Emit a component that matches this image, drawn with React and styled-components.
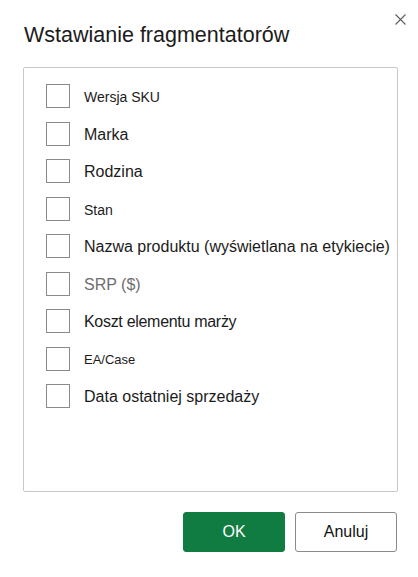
import React from 'react';
import styled, { createGlobalStyle } from 'styled-components';

const GlobalStyle = createGlobalStyle`
  html, body {
    margin: 0;
    padding: 0;
    background: #ffffff;
  }
  body {
    font-family: "Liberation Sans", Arial, sans-serif;
    color: #242424;
    -webkit-font-smoothing: antialiased;
  }
`;

const Dialog = styled.div`
  width: 418px;
  height: 577px;
  box-sizing: border-box;
  padding: 0 20px 0 23px;
  display: flex;
  flex-direction: column;
`;

const Header = styled.div`
  display: flex;
  justify-content: space-between;
  align-items: flex-start;
  height: 67px;
`;

const Title = styled.h1`
  margin: 23px 0 0 1px;
  font-size: 21.5px;
  font-weight: 400;
  line-height: 25px;
  color: #1b1b1b;
`;

const CloseButton = styled.button`
  margin: 12px -9px 0 0;
  width: 14px;
  height: 14px;
  padding: 0;
  border: none;
  background: none;
  display: flex;
  align-items: center;
  justify-content: center;
  cursor: pointer;
`;

const ListBox = styled.div`
  width: 375px;
  height: 425px;
  box-sizing: border-box;
  border: 1px solid #c8c8c8;
  border-radius: 2px;
  padding: 16px 0 0 22px;
  display: flex;
  flex-direction: column;
`;

const Row = styled.label`
  display: flex;
  align-items: center;
  height: 37.5px;
  gap: 14px;
  cursor: pointer;
`;

const Box = styled.span`
  width: 24px;
  height: 24px;
  box-sizing: border-box;
  border: 1px solid #8a8a8a;
  background: #fff;
  flex: none;
  margin-top: -13px;
`;

const Label = styled.span`
  font-size: ${p => p.$size}px;
  color: ${p => (p.$muted ? '#6e6e6e' : '#1b1b1b')};
  letter-spacing: ${p => p.$tight ? '-0.3px' : '0'};
  margin-top: -11px;
  white-space: nowrap;
`;

const Footer = styled.div`
  display: flex;
  justify-content: flex-end;
  gap: 10px;
  margin-top: 20px;
  padding-right: 1px;
`;

const Button = styled.button`
  width: 102px;
  height: 40px;
  box-sizing: border-box;
  border-radius: 3px;
  font-family: "Liberation Sans", Arial, sans-serif;
  font-size: 16px;
  cursor: pointer;
  border: 1px solid ${p => (p.$primary ? '#107c41' : '#8a8a8a')};
  background: ${p => (p.$primary ? '#107c41' : '#ffffff')};
  color: ${p => (p.$primary ? '#ffffff' : '#111111')};
`;

const fields = [
  { text: 'Wersja SKU', size: 14 },
  { text: 'Marka', size: 16 },
  { text: 'Rodzina', size: 16 },
  { text: 'Stan', size: 14 },
  { text: 'Nazwa produktu (wyświetlana na etykiecie)', size: 16 },
  { text: 'SRP ($)', size: 16, muted: true },
  { text: 'Koszt elementu marży', size: 16, tight: true },
  { text: 'EA/Case', size: 13 },
  { text: 'Data ostatniej sprzedaży', size: 16 },
];

export default function App() {
  return (
    <>
      <GlobalStyle />
      <Dialog>
        <Header>
          <Title>Wstawianie fragmentatorów</Title>
          <CloseButton aria-label="Zamknij">
            <svg width="11" height="11" viewBox="0 0 11 11">
              <path d="M0.5 0.5L10.5 10.5M10.5 0.5L0.5 10.5" stroke="#5c5c5c" strokeWidth="1.1" fill="none" />
            </svg>
          </CloseButton>
        </Header>
        <ListBox>
          {fields.map(f => (
            <Row key={f.text}>
              <Box />
              <Label $size={f.size} $muted={f.muted} $tight={f.tight}>{f.text}</Label>
            </Row>
          ))}
        </ListBox>
        <Footer>
          <Button $primary>OK</Button>
          <Button>Anuluj</Button>
        </Footer>
      </Dialog>
    </>
  );
}
